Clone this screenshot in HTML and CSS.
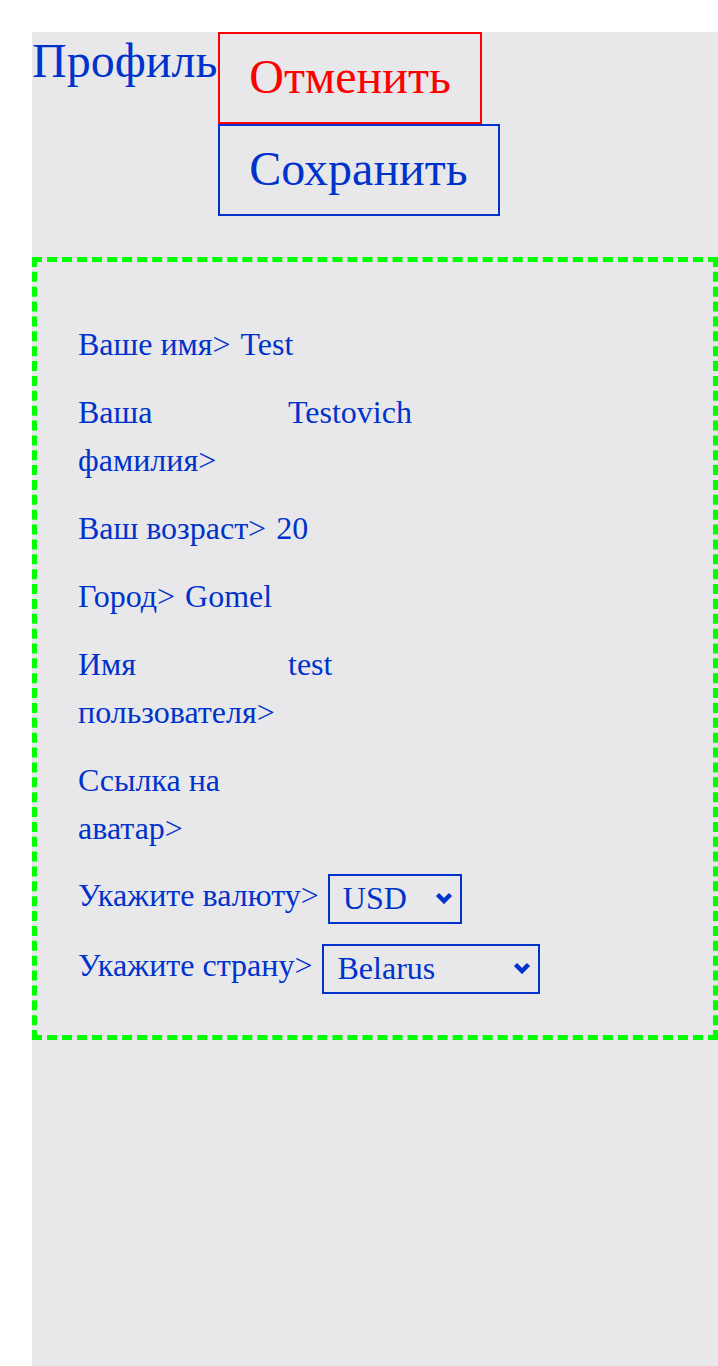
FILE: index.html
```html
<!DOCTYPE html>
<html lang="ru">
<head>
<meta charset="utf-8">
<title>Профиль</title>
<link rel="stylesheet" href="styles.css">
</head>
<body>
<div class="panel">
  <div class="header">
    <h1 class="title">Профиль</h1>
    <div class="actions">
      <button class="btn btn-cancel" type="button">Отменить</button>
      <button class="btn btn-save" type="button">Сохранить</button>
    </div>
  </div>
  <form class="form">
    <div class="row"><span class="label">Ваше имя&gt;</span><span class="value">Test</span></div>
    <div class="row"><span class="label">Ваша фамилия&gt;</span><span class="value">Testovich</span></div>
    <div class="row"><span class="label">Ваш возраст&gt;</span><span class="value">20</span></div>
    <div class="row"><span class="label">Город&gt;</span><span class="value">Gomel</span></div>
    <div class="row"><span class="label">Имя пользователя&gt;</span><span class="value">test</span></div>
    <div class="row"><span class="label">Ссылка на аватар&gt;</span><span class="value"></span></div>
    <div class="row row-select"><span class="label">Укажите валюту&gt;</span>
      <span class="select-wrap select-wrap-currency">
        <select class="select select-currency">
          <option>USD</option>
          <option>EUR</option>
          <option>BYN</option>
        </select>
        <svg class="chevron" width="18" height="12" viewBox="0 0 18 12" aria-hidden="true"><path d="M2.5 2.5 L9 9 L15.5 2.5" fill="none" stroke="#0033cc" stroke-width="4.5" stroke-linejoin="miter" stroke-linecap="butt"/></svg>
      </span>
    </div>
    <div class="row row-select"><span class="label">Укажите страну&gt;</span>
      <span class="select-wrap">
        <select class="select select-country">
          <option>Belarus</option>
          <option>Russia</option>
          <option>Poland</option>
        </select>
        <svg class="chevron" width="18" height="12" viewBox="0 0 18 12" aria-hidden="true"><path d="M2.5 2.5 L9 9 L15.5 2.5" fill="none" stroke="#0033cc" stroke-width="4.5" stroke-linejoin="miter" stroke-linecap="butt"/></svg>
      </span>
    </div>
  </form>
</div>
</body>
</html>
```

FILE: styles.css
```css
html, body {
  margin: 0;
  background: #ffffff;
}

body {
  padding: 32px 0 0 32px;
  font-family: "Liberation Serif", "Times New Roman", serif;
  color: #0033cc;
}

.panel {
  background: #e8e8ea;
  min-height: 1334px;
}

.header {
  display: flex;
  align-items: flex-start;
}

.title {
  margin: 0;
  padding-right: 1px;
  font-size: 48px;
  font-weight: normal;
  line-height: 1.2;
}

.actions {
  display: flex;
  flex-direction: column;
  align-items: flex-start;
}

.btn {
  font-family: "Liberation Serif", "Times New Roman", serif;
  font-size: 48px;
  line-height: 1.2;
  padding: 14px 29px 16px;
  margin: 0;
  background: transparent;
  border: 2px solid;
  border-radius: 0;
  box-sizing: border-box;
  height: 92px;
}

.btn-cancel {
  color: #ff0000;
  border-color: #ff0000;
}

.btn-save {
  color: #0033cc;
  border-color: #0033cc;
  padding-right: 30px;
}

.form {
  margin-top: 41px;
  border: 5px dashed #00ff00;
  padding: 58px 40px 43px 41px;
  display: flex;
  flex-direction: column;
  gap: 20px;
  font-size: 32px;
  line-height: 48px;
}

.row {
  display: flex;
  align-items: baseline;
  gap: 10px;
}

.label {
  max-width: 200px;
}

.row-select {
  align-items: flex-start;
}

.row-select .label {
  max-width: none;
  margin-top: -1px;
}

.select-wrap {
  position: relative;
  display: block;
  margin: 2px 0 -2px;
  height: 50px;
}

.select-wrap-currency {
  margin-left: -1px;
}

.select {
  -webkit-appearance: none;
  appearance: none;
  display: block;
  font-family: "Liberation Serif", "Times New Roman", serif;
  font-size: 32px;
  color: #0033cc;
  background: transparent;
  border: 2px solid #0033cc;
  border-radius: 0;
  height: 50px;
  box-sizing: border-box;
  padding: 0 30px 3px 13px;
  margin: 0;
}

.chevron {
  position: absolute;
  right: 9px;
  top: 18px;
  pointer-events: none;
}

.select-currency {
  width: 134px;
}

.select-country {
  width: 218px;
}
```
